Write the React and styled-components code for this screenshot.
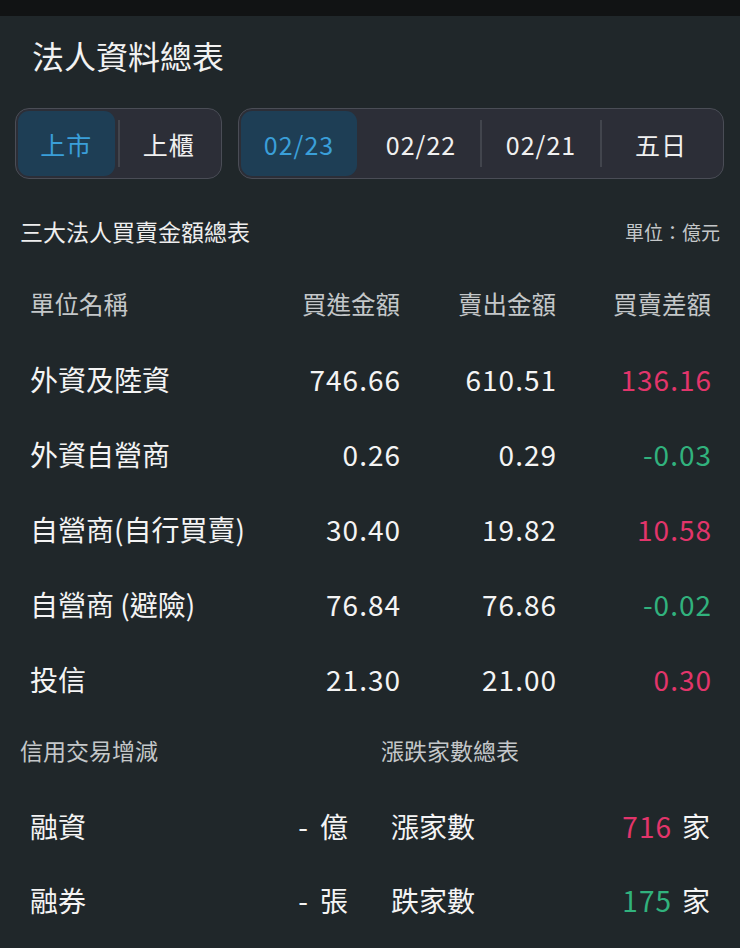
import styled, { createGlobalStyle } from 'styled-components';

const GlobalStyle = createGlobalStyle`
  html, body {
    margin: 0;
    padding: 0;
    background: #20272a;
  }
  body {
    font-family: "Noto Sans CJK TC", "Noto Sans", sans-serif;
    color: #f0f0f0;
  }
`;

const Page = styled.div`
  width: 740px;
  min-height: 948px;
  background: #20272a;
  overflow: hidden;
`;

const StatusBar = styled.div`
  height: 16px;
  background: #111314;
`;

const Title = styled.h1`
  margin: 19px 0 0 32px;
  font-size: 32px;
  line-height: 40px;
  font-weight: 400;
  color: #f2f2f2;
`;

const Controls = styled.div`
  display: flex;
  gap: 16px;
  margin: 33px 16px 0 15px;
`;

const Segmented = styled.div`
  display: grid;
  grid-auto-flow: column;
  grid-auto-columns: 1fr;
  width: ${(p) => p.$width}px;
  height: 71px;
  box-sizing: border-box;
  padding: 2px;
  background: #2c2e37;
  border: 1px solid #4a4d56;
  border-radius: 14px;
`;

const Segment = styled.div`
  position: relative;
  display: grid;
  place-items: center;
  font-size: 25px;
  letter-spacing: 1px;
  color: ${(p) => (p.$active ? '#3a9fd9' : '#f0f0f0')};
  background: ${(p) => (p.$active ? '#1e3e55' : 'transparent')};
  border-radius: 11px;
  margin-right: ${(p) => (p.$active ? '4px' : '0')};

  &::before {
    content: '';
    display: ${(p) => (p.$divider ? 'block' : 'none')};
    position: absolute;
    left: ${(p) => (p.$active ? '0' : '-1px')};
    top: 9px;
    bottom: 9px;
    width: 2px;
    background: #42454d;
  }
`;

const SectionHead = styled.div`
  display: flex;
  justify-content: space-between;
  align-items: center;
  margin: 37px 20px 0 20px;
  height: 30px;
`;

const SectionTitle = styled.div`
  font-size: 23px;
  color: #eeeeee;
`;

const Unit = styled.div`
  font-size: 19px;
  color: #c4c7c9;
`;

const Table = styled.div`
  margin: 20px 29px 0 30px;
`;

const Row = styled.div`
  display: grid;
  grid-template-columns: 1fr 140px 156px 155px;
  align-items: center;
  height: 75px;
`;

const HeadCell = styled.div`
  font-size: 24.5px;
  color: #c4c7c9;
  text-align: ${(p) => (p.$left ? 'left' : 'right')};
`;

const NameCell = styled.div`
  font-size: 28px;
  color: #f4f4f4;
`;

const NumCell = styled.div`
  font-size: 28px;
  letter-spacing: 1px;
  margin-right: -1px;
  text-align: right;
  color: ${(p) => p.$color || '#f4f4f4'};
`;

const Bottom = styled.div`
  display: grid;
  grid-template-columns: 361px 1fr;
  margin: 19px 20px 0 20px;
`;

const Column = styled.div`
  display: flex;
  flex-direction: column;
`;

const ColumnTitle = styled.div`
  height: 30px;
  display: flex;
  align-items: center;
  font-size: 23px;
  color: #c4c7c9;
  margin-bottom: 24px;
`;

const StatRow = styled.div`
  display: flex;
  justify-content: space-between;
  align-items: center;
  height: 74px;
  padding: 0 ${(p) => p.$right}px 0 10px;
  font-size: 28px;
  color: #f4f4f4;
`;

const Dash = styled.span`
  margin-right: 12px;
`;

const Value = styled.span`
  color: ${(p) => p.$color};
  letter-spacing: 1px;
  margin-right: 10px;
`;

const RED = '#e2356b';
const GREEN = '#31b27d';

const rows = [
  { name: '外資及陸資', buy: '746.66', sell: '610.51', diff: '136.16' },
  { name: '外資自營商', buy: '0.26', sell: '0.29', diff: '-0.03' },
  { name: '自營商(自行買賣)', buy: '30.40', sell: '19.82', diff: '10.58' },
  { name: '自營商 (避險)', buy: '76.84', sell: '76.86', diff: '-0.02' },
  { name: '投信', buy: '21.30', sell: '21.00', diff: '0.30' },
];

const dates = ['02/23', '02/22', '02/21', '五日'];

export default function App() {
  return (
    <Page>
      <GlobalStyle />
      <StatusBar />
      <Title>法人資料總表</Title>

      <Controls>
        <Segmented $width={207}>
          <Segment $active>上市</Segment>
          <Segment $divider>上櫃</Segment>
        </Segmented>
        <Segmented $width={486}>
          {dates.map((d, i) => (
            <Segment key={d} $active={i === 0} $divider={i > 1}>
              {d}
            </Segment>
          ))}
        </Segmented>
      </Controls>

      <SectionHead>
        <SectionTitle>三大法人買賣金額總表</SectionTitle>
        <Unit>單位：億元</Unit>
      </SectionHead>

      <Table>
        <Row>
          <HeadCell $left>單位名稱</HeadCell>
          <HeadCell>買進金額</HeadCell>
          <HeadCell>賣出金額</HeadCell>
          <HeadCell>買賣差額</HeadCell>
        </Row>
        {rows.map((r) => (
          <Row key={r.name}>
            <NameCell>{r.name}</NameCell>
            <NumCell>{r.buy}</NumCell>
            <NumCell>{r.sell}</NumCell>
            <NumCell $color={r.diff.startsWith('-') ? GREEN : RED}>{r.diff}</NumCell>
          </Row>
        ))}
      </Table>

      <Bottom>
        <Column>
          <ColumnTitle>信用交易增減</ColumnTitle>
          <StatRow $right={33}>
            <span>融資</span>
            <span>
              <Dash>-</Dash>億
            </span>
          </StatRow>
          <StatRow $right={33}>
            <span>融券</span>
            <span>
              <Dash>-</Dash>張
            </span>
          </StatRow>
        </Column>
        <Column>
          <ColumnTitle>漲跌家數總表</ColumnTitle>
          <StatRow $right={10}>
            <span>漲家數</span>
            <span>
              <Value $color={RED}>716</Value>家
            </span>
          </StatRow>
          <StatRow $right={10}>
            <span>跌家數</span>
            <span>
              <Value $color={GREEN}>175</Value>家
            </span>
          </StatRow>
        </Column>
      </Bottom>
    </Page>
  );
}
